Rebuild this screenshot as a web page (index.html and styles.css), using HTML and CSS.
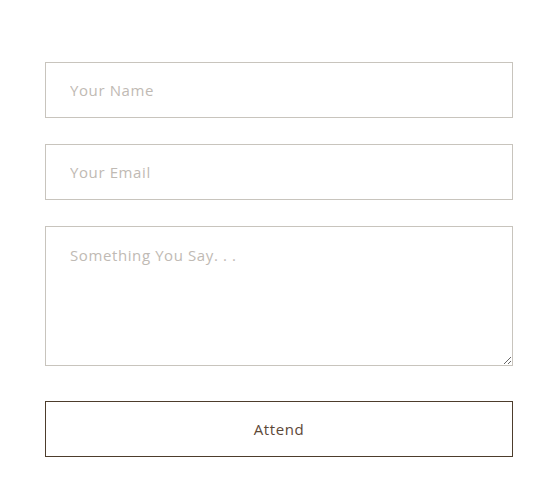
FILE: index.html
```html
<!DOCTYPE html>
<html lang="en">
<head>
    <meta charset="UTF-8">
    <meta name="viewport" content="width=device-width, initial-scale=1.0">
    <title>RSVP</title>
    <link rel="stylesheet" href="styles.css">
</head>
<body>

<form class="rsvp-form">
    <input class="field" type="text" placeholder="Your Name">
    <input class="field" type="email" placeholder="Your Email">
    <textarea class="field field-message" placeholder="Something You Say. . ."></textarea>
    <button class="attend-button" type="button">Attend</button>
</form>

</body>
</html>
```

FILE: styles.css
```css
body {
    margin: 0;
    padding: 0;
    background-color: #ffffff;
    font-family: 'Open Sans', 'Noto Sans', sans-serif;
}

.rsvp-form {
    display: flex;
    flex-direction: column;
    gap: 26px;
    width: 468px;
    margin: 62px 0 0 45px;
}

.field {
    box-sizing: border-box;
    width: 100%;
    height: 56px;
    margin: 0;
    padding: 0 24px;
    border: 1px solid #c8c4bd;
    border-radius: 0;
    background-color: #ffffff;
    font-family: inherit;
    font-size: 15px;
    letter-spacing: 0.6px;
    color: #5a4535;
    outline: none;
}

.field::placeholder {
    color: #bfbab4;
}

.field-message {
    height: 140px;
    padding: 18px 24px;
    margin-bottom: 9px;
    resize: vertical;
}

.attend-button {
    box-sizing: border-box;
    width: 100%;
    height: 56px;
    padding-bottom: 2px;
    border: 1px solid #4d3d2c;
    border-radius: 0;
    background-color: #ffffff;
    font-family: inherit;
    font-size: 15px;
    letter-spacing: 0.6px;
    color: #5c4838;
    cursor: pointer;
}
```
